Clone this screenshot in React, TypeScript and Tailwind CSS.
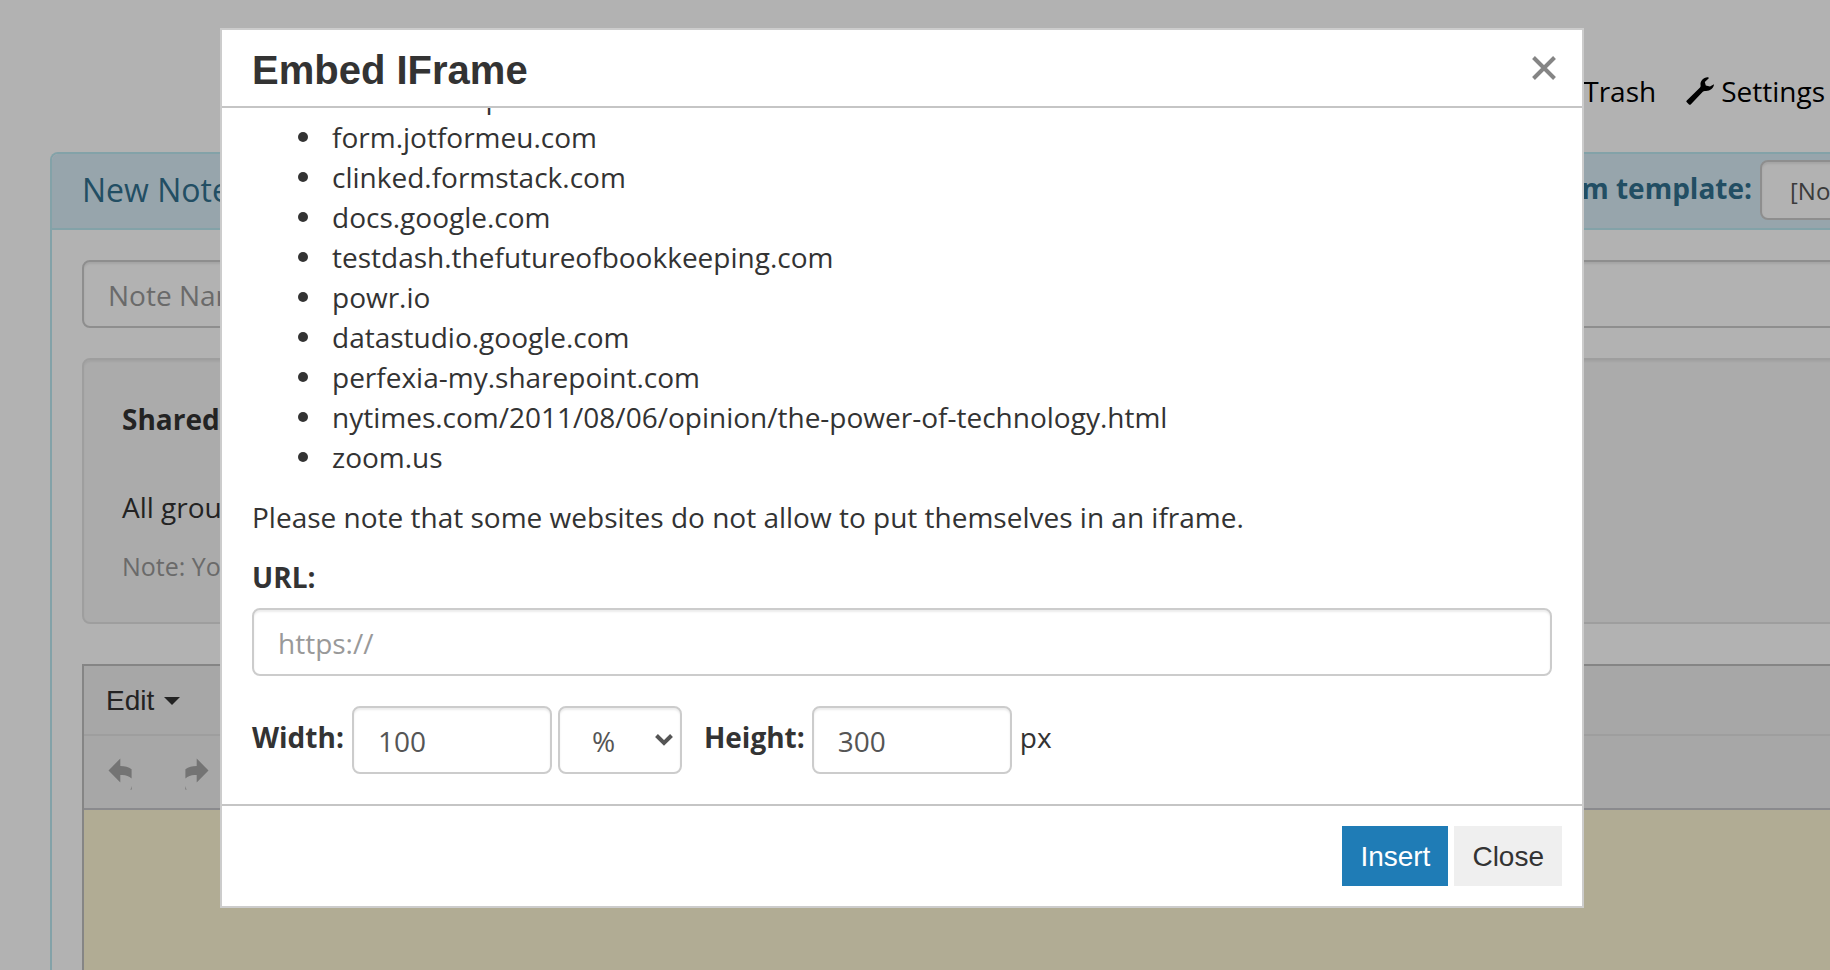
import { Trash2 } from 'lucide-react';

const HOSTS = [
  'embed.zeetpo.co',
  'form.jotformeu.com',
  'clinked.formstack.com',
  'docs.google.com',
  'testdash.thefutureofbookkeeping.com',
  'powr.io',
  'datastudio.google.com',
  'perfexia-my.sharepoint.com',
  'nytimes.com/2011/08/06/opinion/the-power-of-technology.html',
  'zoom.us',
];

const field =
  'pt-0.5 border-2 border-[#ccc] rounded-lg bg-white text-[#555] placeholder:text-[#999] shadow-[inset_0_2px_2px_rgba(0,0,0,0.075)]';

const WrenchIcon = () => (
  <svg width="28" height="28" viewBox="0 0 28 28" fill="currentColor" aria-hidden="true">
    <path d="M21.5 0.3C17.5 0.3 13.8 4 14.6 8.6C14.7 9.6 14.4 10.2 13.8 10.8L0.8 23.4C0.2 24 0.2 24.6 0.6 25.1L3 27.5C3.6 28 4.2 27.9 4.7 27.4L16.8 14.8C17.5 14.1 18.2 13.8 19.2 13.9C23.8 14.3 27.9 11 28 7.2L24 9.5L19.8 8.6L18.8 5L22.8 1.2C22.9 0.7 22.2 0.3 21.5 0.3Z" />
  </svg>
);

const ArrowIcon = ({ flipped = false }: { flipped?: boolean }) => (
  <svg
    width="24"
    height="32"
    viewBox="0 0 24 32"
    fill="currentColor"
    aria-hidden="true"
    className={flipped ? '-scale-x-100' : ''}
  >
    <path d="M0.5 12.5L12.3 0.5V8C17 8 20.5 8.8 23.6 11.2V20.5C20.5 17.6 17 16.5 12.3 17V24.5Z" />
    <path d="M23.6 28V31.5L22.5 32Z" />
  </svg>
);

function Background() {
  return (
    <div className="min-h-screen flex flex-col overflow-hidden">
      <nav className="flex justify-end items-center gap-[30px] pt-[71px] pb-[41px] pr-[5px] text-black">
        <a href="#trash" className="flex items-center gap-[7px]">
          <Trash2 size={28} />
          Trash
        </a>
        <a href="#settings" className="flex items-center gap-[7px]">
          <WrenchIcon />
          Settings
        </a>
      </nav>

      {/* the panel runs past the right edge of the window */}
      <section className="grow flex flex-col ml-[50px] -mr-[160px] border-2 border-b-0 border-[#bce8f1] rounded-t-lg">
        <header className="flex items-center justify-between h-[76px] px-[30px] pb-0.5 bg-[#d9edf7] text-[#31708f] border-b-2 border-[#bce8f1] rounded-t-md">
          <h1 className="text-[32px]">New Note</h1>
          <div className="flex items-center gap-2">
            <label htmlFor="template" className="font-bold pb-1">Create from template:</label>
            <select id="template" className={`${field} appearance-none w-[198px] h-[60px] pl-7 text-2xl`}>
              <option>[No template]</option>
            </select>
          </div>
        </header>

        <div className="grow flex flex-col p-[30px] pb-0">
          <input aria-label="Note name" placeholder="Note Name" className={`${field} h-[68px] px-6`} />

          <div className="mt-[30px] px-[38px] pt-[39px] pb-9 bg-[#f5f5f5] border-2 border-[#e3e3e3] rounded-lg shadow-[inset_0_2px_2px_rgba(0,0,0,0.05)]">
            <p className="font-bold">Shared with</p>
            <p className="mt-12">All group members</p>
            <p className="mt-[19px] text-[25px] text-[#999]">Note: You can change this later</p>
          </div>

          <div className="grow flex flex-col mt-10 border-2 border-b-0 border-[#bfbfbf]">
            <div className="flex items-center h-[70px] px-[22px] pt-0.5 bg-[#f0f0f0] border-b-2 border-[#e2e2e2]">
              <button className="flex items-center gap-2.5 font-['Liberation_Sans',sans-serif]">
                Edit
                <svg width="16" height="8" viewBox="0 0 16 8" fill="currentColor" aria-hidden="true">
                  <path d="M0 0H16L8 8Z" />
                </svg>
              </button>
            </div>
            <div className="flex items-center gap-[53px] h-[74px] px-6 pt-1 bg-[#f0f0f0] border-b-2 border-[#c6c6ca] text-[#a6a6a6]">
              <button aria-label="Undo"><ArrowIcon /></button>
              <button aria-label="Redo"><ArrowIcon flipped /></button>
            </div>
            <div className="grow bg-[#fef6d5]" />
          </div>
        </div>
      </section>
    </div>
  );
}

function EmbedDialog() {
  return (
    <div
      role="dialog"
      aria-labelledby="dialog-title"
      className="bg-white border-2 border-[#ccc]"
    >
      <header className="flex items-center justify-between h-[78px] pl-[30px] pr-[26px] border-b-2 border-[#c5c5c5]">
        <h2 id="dialog-title" className="pt-1 font-['Liberation_Sans',sans-serif] text-[40px] font-bold">Embed IFrame</h2>
        <button aria-label="Close dialog" className="text-[#858585]">
          <svg width="24" height="24" viewBox="0 0 24 24" stroke="currentColor" strokeWidth="4" aria-hidden="true">
            <path d="M1.5 1.5L22.5 22.5M22.5 1.5L1.5 22.5" />
          </svg>
        </button>
      </header>

      <div className="overflow-hidden px-[30px] pb-[30px]">
        <ul className="-mt-[31px] pl-[46px]">
          {HOSTS.map((host) => (
            <li
              key={host}
              className="flex items-center gap-6 before:w-2.5 before:h-2.5 before:rounded-full before:bg-[#333]"
            >
              {host}
            </li>
          ))}
        </ul>
        <p className="mt-5">Please note that some websites do not allow to put themselves in an iframe.</p>
        <label htmlFor="url" className="block mt-5 font-bold">URL:</label>
        <input id="url" placeholder="https://" className={`${field} block w-full h-[68px] mt-[11px] px-6`} />
        <div className="flex items-center mt-[30px]">
          <label htmlFor="width" className="font-bold pb-1.5 mr-2">Width:</label>
          <input id="width" defaultValue="100" className={`${field} w-[200px] h-[68px] px-6`} />
          <div className="grid items-center ml-1.5">
            <select
              aria-label="Width unit"
              className={`${field} col-start-1 row-start-1 appearance-none w-[124px] h-[68px] pl-8`}
            >
              <option>%</option>
              <option>px</option>
            </select>
            <svg
              width="18"
              height="12"
              viewBox="0 0 18 12"
              fill="none"
              stroke="#555"
              strokeWidth="4"
              aria-hidden="true"
              className="col-start-1 row-start-1 justify-self-end mr-[9px] pointer-events-none"
            >
              <path d="M1.5 1.5L9 9L16.5 1.5" />
            </svg>
          </div>
          <label htmlFor="height" className="font-bold pb-1.5 ml-[22px] mr-[7px]">Height:</label>
          <input id="height" defaultValue="300" className={`${field} w-[200px] h-[68px] px-6`} />
          <span className="pb-1.5 ml-2">px</span>
        </div>
      </div>

      <footer className="flex justify-end gap-1.5 p-5 border-t-2 border-[#c5c5c5] font-['Liberation_Sans',sans-serif]">
        <button className="h-[60px] px-[18px] pt-0.5 bg-[#1f7cb6] text-white">Insert</button>
        <button className="h-[60px] px-[18px] pt-0.5 bg-[#efefef]">Close</button>
      </footer>
    </div>
  );
}

export default function App() {
  return (
    <div className="relative bg-white font-['Open_Sans',sans-serif] text-[28px] leading-10 text-[#333]">
      <Background />
      <div className="absolute inset-0 pt-7 pl-[220px] pr-[246px] bg-black/30">
        <EmbedDialog />
      </div>
    </div>
  );
}
